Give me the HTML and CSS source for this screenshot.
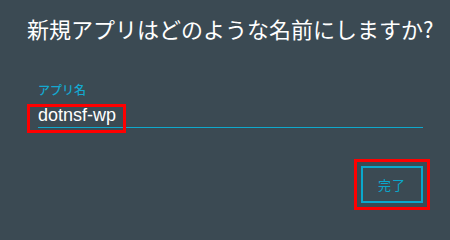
FILE: index.html
```html
<!DOCTYPE html>
<html lang="ja">
<head>
<meta charset="utf-8">
<title>新規アプリ</title>
<link rel="stylesheet" href="styles.css">
</head>
<body>
<div class="dialog">
  <h1 class="title">新規アプリはどのような名前にしますか?</h1>
  <div class="field">
    <label class="field-label">アプリ名</label>
    <div class="field-input"><span class="value">dotnsf-wp</span></div>
  </div>
  <div class="actions">
    <button class="done">完了</button>
  </div>
</div>
</body>
</html>
```

FILE: styles.css
```css
html, body {
  margin: 0;
  padding: 0;
  background: #3b4a53;
  width: 450px;
  height: 225px;
  overflow: hidden;
}

.dialog {
  display: flex;
  flex-direction: column;
  padding: 12px 27px 0 27px;
  font-family: "Noto Sans CJK JP", "Liberation Sans", sans-serif;
}

.title {
  margin: 0;
  font-size: 22px;
  line-height: 32px;
  font-weight: normal;
  color: #ffffff;
  white-space: nowrap;
}

.field {
  display: flex;
  flex-direction: column;
  margin: 38px 0 0 11px;
}

.field-label {
  font-size: 12px;
  line-height: 16px;
  font-weight: 500;
  color: #14a8d0;
}

.field-input {
  margin-top: 4px;
  height: 23px;
  padding-bottom: 2px;
  border-bottom: 1px solid #0fa8cc;
}

.value {
  position: relative;
  display: inline-block;
  font-family: "Liberation Sans", Arial, sans-serif;
  font-size: 18px;
  line-height: 23px;
  color: #ffffff;
}

.value::after {
  content: "";
  position: absolute;
  left: -11px;
  right: -10px;
  top: 0;
  bottom: -6px;
  border: 3px solid #ff0000;
}

.actions {
  display: flex;
  justify-content: flex-end;
  margin-top: 38px;
}

.done {
  width: 62px;
  height: 37px;
  border: 2px solid #0aa8cc;
  background: transparent;
  color: #0aa8cc;
  font-family: "Noto Sans CJK JP", sans-serif;
  font-size: 13px;
  letter-spacing: 1px;
  padding: 0;
  outline: 3px solid #ff0000;
  outline-offset: 4px;
}
```
